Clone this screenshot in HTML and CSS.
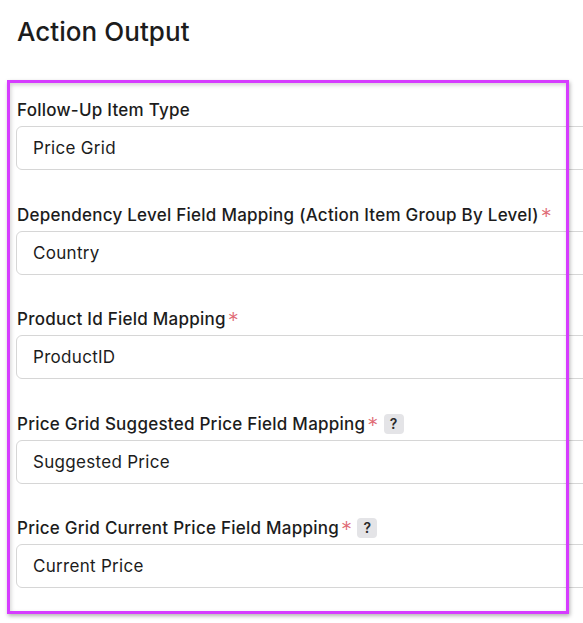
FILE: index.html
```html
<!DOCTYPE html>
<html>
<head>
<meta charset="utf-8">
<link rel="stylesheet" href="styles.css">
</head>
<body>
<div class="page">
  <h1 class="title">Action Output</h1>
  <div class="form">
    <div class="group">
      <div class="label">Follow-Up Item Type</div>
      <div class="input">Price Grid</div>
    </div>
    <div class="group">
      <div class="label">Dependency Level Field Mapping (Action Item Group By Level)<span class="req">*</span></div>
      <div class="input">Country</div>
    </div>
    <div class="group">
      <div class="label">Product Id Field Mapping<span class="req">*</span></div>
      <div class="input">ProductID</div>
    </div>
    <div class="group">
      <div class="label">Price Grid Suggested Price Field Mapping<span class="req">*</span><span class="help">?</span></div>
      <div class="input">Suggested Price</div>
    </div>
    <div class="group">
      <div class="label">Price Grid Current Price Field Mapping<span class="req">*</span><span class="help">?</span></div>
      <div class="input">Current Price</div>
    </div>
  </div>
  <div class="highlight"></div>
</div>
</body>
</html>
```
FILE: styles.css
```css
html, body {
  margin: 0;
  padding: 0;
  overflow: hidden;
  background: #ffffff;
}
body {
  font-family: Inter, "Noto Sans", sans-serif;
  color: #1c1c1c;
  width: 583px;
  height: 623px;
}
.page {
  position: relative;
  padding: 14px 0 0 16px;
}
.title {
  margin: 0 0 0 1px;
  font-size: 26px;
  font-weight: 500;
  line-height: 36px;
  letter-spacing: 0.05px;
}
.form {
  margin-top: 48px;
  display: flex;
  flex-direction: column;
  gap: 32.5px;
}
.group {
  display: flex;
  flex-direction: column;
  gap: 4px;
}
.label {
  display: flex;
  align-items: center;
  font-size: 17px;
  font-weight: 450;
  line-height: 24px;
  letter-spacing: 0.25px;
  padding-left: 1px;
  white-space: nowrap;
}
.req {
  color: #e06a74;
  margin-left: 2px;
  font-weight: 300;
  font-size: 22px;
  line-height: 24px;
  position: relative;
  top: 1px;
}
.help {
  display: inline-flex;
  align-items: center;
  justify-content: center;
  width: 20px;
  height: 20px;
  margin-left: 5px;
  border-radius: 4px;
  background: #e4e4e7;
  font-size: 14px;
  font-weight: 600;
  color: #2a2a2a;
  letter-spacing: 0;
}
.input {
  box-sizing: border-box;
  width: 640px;
  height: 44px;
  border: 1px solid #d6d6d6;
  border-radius: 6px;
  padding: 0 16px;
  display: flex;
  align-items: center;
  font-size: 17px;
  letter-spacing: 0.3px;
  color: #1c1c1c;
}
.highlight {
  position: absolute;
  left: 7px;
  top: 80px;
  width: 562px;
  height: 534px;
  box-sizing: border-box;
  border: 3px solid #d63cff;
  box-shadow: 1px 2px 4px rgba(0,0,0,0.3), inset 1px 2px 4px rgba(0,0,0,0.18);
  pointer-events: none;
}
```
